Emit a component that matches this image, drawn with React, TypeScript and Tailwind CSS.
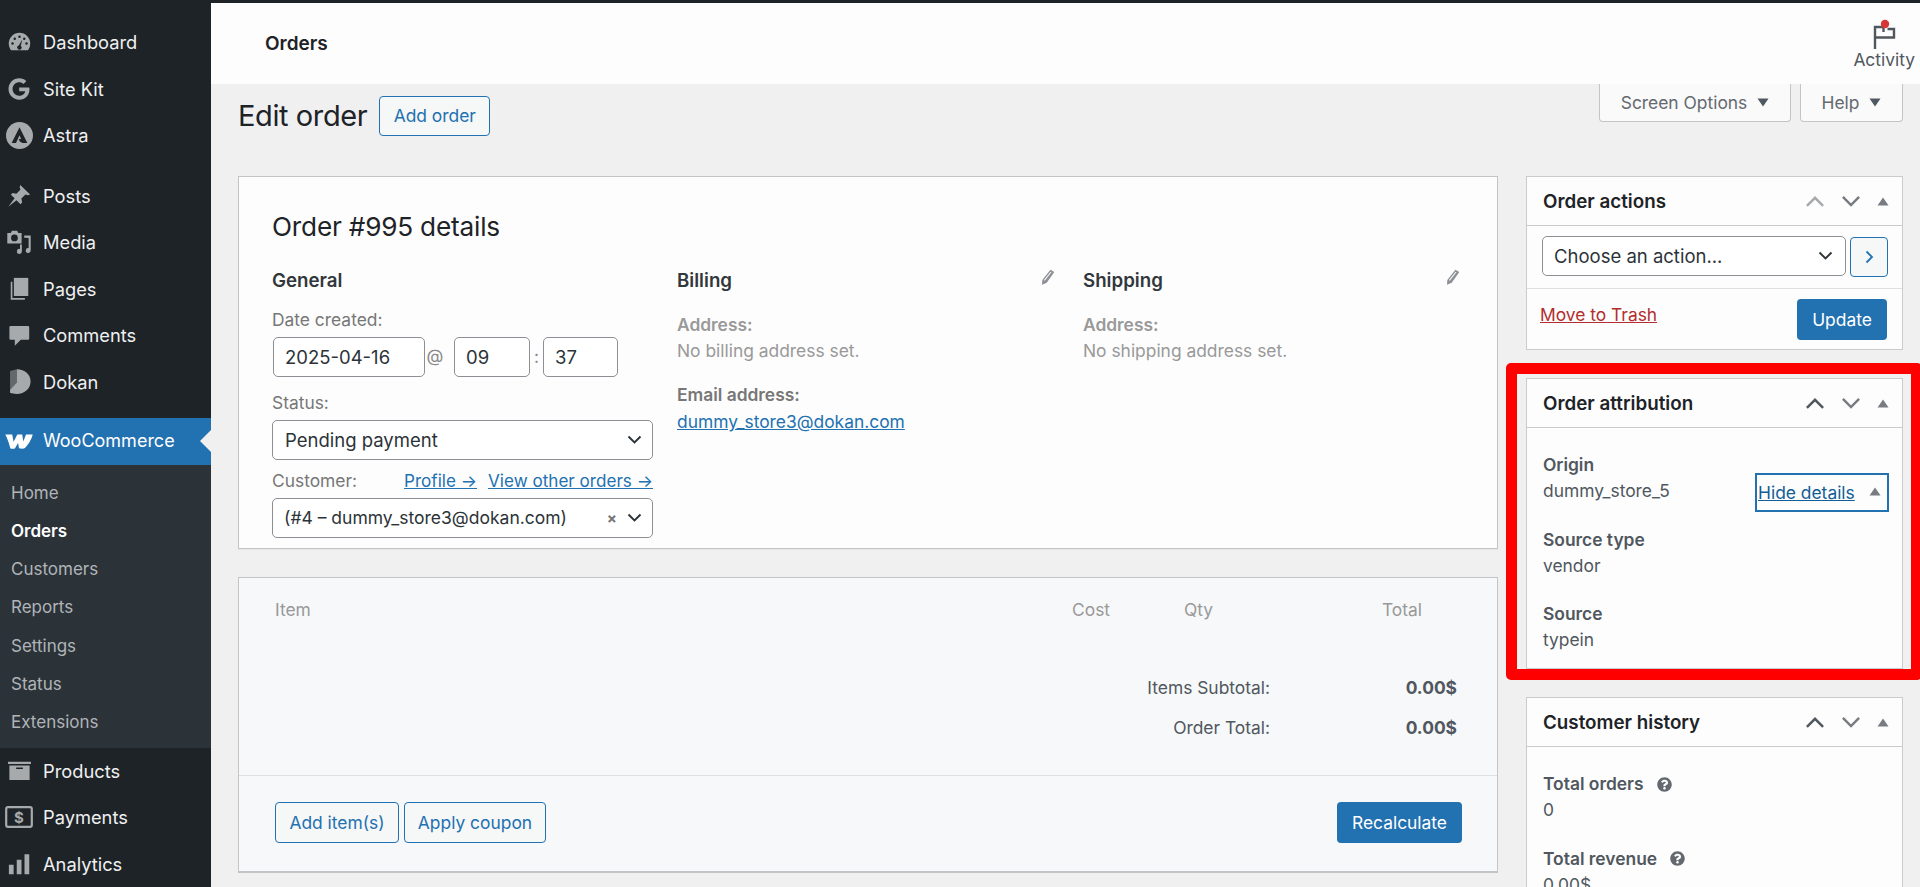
import React from "react";
import { FaGoogle, FaQuestionCircle } from "react-icons/fa";

const font = "[font-family:Inter,'Liberation_Sans',sans-serif]";

const Ic = ({ children, size = 24 }: { children: React.ReactNode; size?: number }) => (
  <svg width={size} height={size} viewBox="0 0 20 20" fill="#a7aaad">{children}</svg>
);

const icons: Record<string, React.ReactNode> = {
  dashboard: (
    <Ic size={25}>
      <path d="M3.2 16.200h13.600A8.600 8.600 0 0 0 18.600 10.800 8.600 8.600 0 0 0 1.400 10.800c0 2 .7 3.900 1.800 5.400z" />
      <circle cx="4.400" cy="10.800" r="1" fill="#1d2327" />
      <circle cx="6.200" cy="7" r="1" fill="#1d2327" />
      <circle cx="10" cy="5.300" r="1" fill="#1d2327" />
      <circle cx="13.800" cy="7" r="1" fill="#1d2327" />
      <circle cx="15.600" cy="10.800" r="1" fill="#1d2327" />
      <path d="M12.200 7.600l-1.200 5.100a1.700 1.700 0 1 1-1.600-.3z" fill="#1d2327" />
    </Ic>
  ),
  sitekit: <FaGoogle size={22} color="#a7aaad" />,
  astra: (
    <Ic size={27}>
      <circle cx="10" cy="10" r="10" />
      <path d="M10 3.800L4.200 15.600h3.200L10 9.800l1.200 2.700H9.400l1 2.200 1.900.9h3.500z" fill="#1d2327" />
    </Ic>
  ),
  posts: (
    <Ic size={25}>
      <path d="M10.600 1.500l7.900 7.600-1.800.7-1.900-.7-3.300 3.300.6 3.100-1.300 1.400-3.200-3.100-6.600 5.200 5.100-6.800-3-2.900 1.400-1.400 3 .6 3.300-3.400-.7-1.800z" />
    </Ic>
  ),
  media: (
    <Ic size={26}>
      <path fillRule="evenodd" d="M1 3h2.600L4.600 1.400h4L9.500 3H12v8.200H1zM6.500 4.300a2.600 2.600 0 1 0 0 5.200 2.600 2.600 0 0 0 0-5.200z" />
      <path d="M14 5h5v11.500a1.900 1.900 0 1 1-1.600-1.900V7h-1.600v-.2H14zM10.800 12h1.400v5.200a1.900 1.900 0 1 1-1.400-1.800z" />
    </Ic>
  ),
  pages: (
    <Ic size={25}>
      <path d="M5.500 1.500h11.500v14.500H5.500z" />
      <path d="M3 4.500h1.300v13h10V19H3z" />
    </Ic>
  ),
  comments: (
    <Ic size={24}>
      <path d="M3 2.500h14.500a1 1 0 0 1 1 1v9.500a1 1 0 0 1-1 1h-6l-5 5v-5H3a1 1 0 0 1-1-1V3.500a1 1 0 0 1 1-1z" />
    </Ic>
  ),
  dokan: (
    <Ic size={27}>
      <path d="M3 2.200l5-1.200v11L3 16z" fill="#62686c" />
      <path d="M8 1c6 0 10.200 3.800 10.200 9S14 19.200 8 19.200c-2 0-3.800-.3-5-.8v-2.200L8 11z" />
    </Ic>
  ),
  products: (
    <Ic size={27}>
      <path d="M1.500 3.500h17v1.600h-17zM2.500 6.300h15v10.700h-15z" />
      <rect x="7.500" y="7.800" width="5" height="1.100" fill="#1d2327" />
    </Ic>
  ),
  payments: (
    <svg width="28" height="22" viewBox="0 0 28 22">
      <rect x="1.200" y="1.200" width="25.600" height="19.600" rx="1.800" fill="none" stroke="#a7aaad" strokeWidth="2.200" />
      <text x="14" y="16.500" textAnchor="middle" fontSize="15" fontWeight="700" fill="#a7aaad" fontFamily="Inter, sans-serif">$</text>
    </svg>
  ),
  analytics: (
    <Ic size={25}>
      <path d="M1.500 11h3.800v7.500H1.500zM7.800 7h3.800v11.500H7.800zM14 2.500h3.800v16H14z" />
    </Ic>
  ),
};

const Woo = () => (
  <svg width="28" height="15" viewBox="0 0 28 15" fill="#fff">
    <path d="M.3.4h6.900l1.400 7.400L12.300.4h4.900l1.100 7.200L21 .4h6.700c-1 4.300-4.600 11.300-8.700 14.200-2 .2-3.600 0-5-.4l-.9-5.200-3.200 5.400c-1.700.3-3.200.3-4.500 0C4.200 10 2.500 4.200.3.4z" />
  </svg>
);

const MenuItem = ({ icon, label }: { icon: string; label: string }) => (
  <div className="h-[46.500px] flex items-center text-[#f0f0f1] text-[18.300px]">
    <span className="w-[43px] flex justify-center pr-[5px] shrink-0">{icons[icon]}</span>
    <span>{label}</span>
  </div>
);

const Sub = ({ label, active }: { label: string; active?: boolean }) => (
  <div className={`h-[38.200px] flex items-center pl-[11px] text-[17px] ${active ? "text-white font-semibold" : "text-[#b0b4b8]"}`}>{label}</div>
);

const Chev = ({ up, color, size = 21 }: { up?: boolean; color: string; size?: number }) => (
  <svg width={size} height={size * 0.62} viewBox="0 0 21 13" fill="none" stroke={color} strokeWidth="2.600">
    {up ? <path d="M2 11.500L10.500 3 19 11.500" /> : <path d="M2 2l8.500 8.500L19 2" />}
  </svg>
);

const Tri = ({ color = "#787c82", down }: { color?: string; down?: boolean }) => (
  <svg width="12" height="9" viewBox="0 0 12 9" fill={color}>
    {down ? <path d="M.5 .5h11L6 8.500z" /> : <path d="M.5 8.500h11L6 .5z" />}
  </svg>
);

const Pencil = () => (
  <svg width="14" height="16" viewBox="0 0 13 15" fill="#8c8f94">
    <path d="M8.800.6l3.600 2.300L5.300 13 .9 14.800l.3-4.600z" />
    <path d="M2.700 10.400l6.300-7.900.7.500-6.200 8z" fill="#fdfdfd" />
  </svg>
);

const SelectChev = () => (
  <svg width="15" height="10" viewBox="0 0 15 10" fill="none" stroke="#2c3338" strokeWidth="1.900">
    <path d="M1.500 1.500l6 6 6-6" />
  </svg>
);

const BoxHeader = ({ title, upColor = "#50575e" }: { title: string; upColor?: string }) => (
  <div className="h-[49px] border-b border-[#c9cbce] flex items-center pl-[16px] pr-[13px] pt-[1px] shrink-0">
    <span className="font-semibold text-[18.800px] text-[#1d2327] flex-1">{title}</span>
    <span className="mr-[16px] flex"><Chev up color={upColor} size={20} /></span>
    <span className="mr-[16px] flex"><Chev color="#787c82" size={20} /></span>
    <Tri />
  </div>
);

const OutlineBtn = ({ children, w }: { children: React.ReactNode; w: string }) => (
  <div className={`${w} h-[41px] rounded-[4px] border border-[#2271b1] bg-[#f6f7f7] text-[#2271b1] flex items-center justify-center`}>{children}</div>
);

const Field = ({ label, value, icon, mb = "mb-[22.500px]" }: { label: string; value: string; icon?: boolean; mb?: string }) => (
  <div className={mb}>
    <div className="h-[26px] leading-[26px] font-semibold text-[#50575e] flex items-center">
      {label}
      {icon && <span className="ml-[13px] flex"><FaQuestionCircle size={15} color="#646970" /></span>}
    </div>
    <div className="h-[26px] leading-[26px] text-[#50575e]">{value}</div>
  </div>
);

const inputCls = "h-[40px] rounded-[5px] border border-[#8c8f94] text-[#2c3338] flex items-center text-[18.500px] bg-white";
const h3Cls = "font-semibold text-[18.700px] leading-[24px] text-[#32373c]";

export default function App() {
  return (
    <div className={`${font} h-[887px] w-[1920px] overflow-hidden flex bg-[#f0f0f1] text-[17.400px] leading-[20px]`}>
      <aside className="w-[211px] shrink-0 bg-[#1d2327] pt-[19px] flex flex-col">
        <MenuItem icon="dashboard" label="Dashboard" />
        <MenuItem icon="sitekit" label="Site Kit" />
        <MenuItem icon="astra" label="Astra" />
        <div className="h-[14px]" />
        <MenuItem icon="posts" label="Posts" />
        <MenuItem icon="media" label="Media" />
        <MenuItem icon="pages" label="Pages" />
        <MenuItem icon="comments" label="Comments" />
        <MenuItem icon="dokan" label="Dokan" />
        <div className="mt-[13px] h-[47px] bg-[#2271b1] flex items-center text-white text-[18px] relative">
          <span className="w-[43px] flex justify-center pr-[5px] shrink-0"><Woo /></span>
          WooCommerce
          <span className="absolute right-0 top-1/2 -translate-y-1/2 w-0 h-0 border-y-[11px] border-y-transparent border-r-[11px] border-r-[#f0f0f1]" />
        </div>
        <div className="bg-[#2c3338] h-[283px] pt-[9px]">
          <Sub label="Home" />
          <Sub label="Orders" active />
          <Sub label="Customers" />
          <Sub label="Reports" />
          <Sub label="Settings" />
          <Sub label="Status" />
          <Sub label="Extensions" />
        </div>
        <MenuItem icon="products" label="Products" />
        <MenuItem icon="payments" label="Payments" />
        <MenuItem icon="analytics" label="Analytics" />
      </aside>

      <main className="flex-1 min-w-0 flex flex-col">
        <header className="h-[84px] shrink-0 border-t-[3px] border-[#1d2327] bg-[#fdfdfd] flex items-center pl-[54px] pr-[5px]">
          <span className="font-semibold text-[19px] text-[#1d2327] flex-1">Orders</span>
          <div className="flex flex-col items-center pt-[1px]">
            <svg width="26" height="30" viewBox="0 0 26 30" fill="none" stroke="#50575e" strokeWidth="2.400">
              <path d="M4 30V8h8.500v5" />
              <path d="M16.500 10H23v8.500H4" />
              <circle cx="14" cy="5" r="4.200" fill="#d63638" stroke="none" />
            </svg>
            <span className="text-[#50575e] mt-[1px]">Activity</span>
          </div>
        </header>

        <div className="flex pl-[27px]">
          <div className="w-[1260px] shrink-0 mr-[28px]">
            <div className="h-[92px] flex items-start pt-[12px]">
              <h1 className="text-[29px] leading-[40px] text-[#1d2327] tracking-[-0.4px] mr-[12px]">Edit order</h1>
              <div className="h-[40px] w-[111px] rounded-[4px] border border-[#2271b1] bg-[#f6f7f7] text-[#2271b1] flex items-center justify-center">Add order</div>
            </div>

            <section className="h-[373px] border border-[#c3c4c7] bg-[#fdfdfd] pl-[33px] pt-[31px] shadow-[0_1px_1px_rgba(0,0,0,0.04)]">
              <h2 className="text-[26.200px] leading-[38px] text-[#1d2327] font-normal tracking-[-0.2px]">Order #995 details</h2>
              <div className="flex mt-[23px]">
                <div className="w-[381px] mr-[24px] shrink-0">
                  <h3 className={h3Cls}>General</h3>
                  <div className="mt-[15px] leading-[24px] text-[#777]">Date created:</div>
                  <div className="flex items-center mt-[5px] text-[#888]">
                    <div className={`${inputCls} w-[152px] ml-px pl-[11px]`}>2025-04-16</div>
                    <span className="w-[29px] text-center pr-[9px] -mt-[2px]">@</span>
                    <div className={`${inputCls} w-[76px] pl-[11px]`}>09</div>
                    <span className="w-[13px] text-center">:</span>
                    <div className={`${inputCls} w-[75px] pl-[11px]`}>37</div>
                  </div>
                  <div className="mt-[14px] leading-[24px] text-[#777]">Status:</div>
                  <div className={`${inputCls} w-[381px] mt-[5px] pl-[12px] pr-[10px] justify-between`}>
                    <span>Pending payment</span><SelectChev />
                  </div>
                  <div className="mt-[9px] h-[24px] flex items-center justify-between text-[#777]">
                    <span>Customer:</span>
                    <span className="text-[#2271b1] underline text-[17.100px] flex gap-[11px]"><span>Profile →</span><span>View other orders →</span></span>
                  </div>
                  <div className={`${inputCls} w-[381px] mt-[5px] pl-[11px] pr-[10px] justify-between`}>
                    <span className="text-[17.500px]">(#4 – dummy_store3@dokan.com)</span>
                    <span className="flex items-center gap-[10px]"><span className="text-[#777] font-bold text-[15px] leading-none">×</span><SelectChev /></span>
                  </div>
                </div>
                <div className="w-[406px] shrink-0 pr-[28px]">
                  <div className="flex justify-between items-start"><h3 className={h3Cls}>Billing</h3><span><Pencil /></span></div>
                  <div className="mt-[19px] leading-[26px] font-semibold text-[#999]">Address:</div>
                  <div className="leading-[26px] text-[#999]">No billing address set.</div>
                  <div className="mt-[18px] leading-[26px] font-semibold text-[#777]">Email address:</div>
                  <div className="leading-[28px] text-[#2271b1] underline">dummy_store3@dokan.com</div>
                </div>
                <div className="w-[378px] shrink-0 pr-[1px]">
                  <div className="flex justify-between items-start"><h3 className={h3Cls}>Shipping</h3><span><Pencil /></span></div>
                  <div className="mt-[19px] leading-[26px] font-semibold text-[#999]">Address:</div>
                  <div className="leading-[26px] text-[#999]">No shipping address set.</div>
                </div>
              </div>
            </section>

            <section className="mt-[28px] h-[296px] border border-[#c3c4c7] border-b-2 bg-[#f7f8fa] flex flex-col">
              <div className="h-[198px] px-[36px] pt-[20px] shrink-0 border-b border-[#dfe0e2]">
                <div className="flex text-[#999] leading-[24px]">
                  <span className="flex-1">Item</span>
                  <span className="w-[112px]">Cost</span>
                  <span className="w-[198px]">Qty</span>
                  <span className="w-[40px] mr-[39px]">Total</span>
                </div>
                <div className="mt-[54px] mr-[4px] flex justify-end text-[#50575e] leading-[24px]">
                  <span>Items Subtotal:</span><span className="w-[187px] text-right font-bold text-[#50575e]">0.00$</span>
                </div>
                <div className="mt-[16px] mr-[4px] flex justify-end text-[#50575e] leading-[24px]">
                  <span>Order Total:</span><span className="w-[187px] text-right font-bold text-[#50575e]">0.00$</span>
                </div>
              </div>
              <div className="flex items-start pt-[26px] pl-[36px] pr-[35px]">
                <OutlineBtn w="w-[124px] mr-[5px]">Add item(s)</OutlineBtn>
                <OutlineBtn w="w-[142px]">Apply coupon</OutlineBtn>
                <div className="ml-auto w-[125px] h-[41px] rounded-[4px] bg-[#2271b1] text-white flex items-center justify-center">Recalculate</div>
              </div>
            </section>
          </div>

          <div className="w-[377px] shrink-0">
            <div className="h-[92px] flex items-start justify-end gap-[9px]">
              <div className="w-[192px] h-[38px] border border-t-0 border-[#c3c4c7] rounded-b-[4px] bg-[#fafafa] text-[#646970] flex items-center justify-center gap-[10px] -ml-[100px]">Screen Options <Tri color="#50575e" down /></div>
              <div className="w-[103px] h-[38px] border border-t-0 border-[#c3c4c7] rounded-b-[4px] bg-[#fafafa] text-[#646970] flex items-center justify-center gap-[10px]">Help <Tri color="#50575e" down /></div>
            </div>

            <section className="h-[174px] border border-[#c9cbce] bg-[#fdfdfd]">
              <BoxHeader title="Order actions" upColor="#a7aaad" />
              <div className="h-[63px] border-b border-[#dfe0e2] pl-[15px] pt-[10px] flex items-start">
                <div className={`${inputCls} w-[304px] pl-[11px] pr-[12px] justify-between`}><span>Choose an action...</span><SelectChev /></div>
                <div className="ml-[4px] mt-[1px] w-[38px] h-[40px] border border-[#2271b1] rounded-[4px] bg-[#f6f7f7] flex items-center justify-center">
                  <svg width="9" height="14" viewBox="0 0 9 14" fill="none" stroke="#2271b1" strokeWidth="1.800"><path d="M1.500 1.500l5.500 5.500-5.500 5.500" /></svg>
                </div>
              </div>
              <div className="flex justify-between items-start pl-[13px] pr-[15px] pt-[10px]">
                <span className="text-[#b32d2e] underline mt-[6px]">Move to Trash</span>
                <div className="w-[90px] h-[41px] bg-[#2271b1] text-white rounded-[4px] flex items-center justify-center">Update</div>
              </div>
            </section>

            <div className="relative mt-[28px]">
              <section className="h-[291px] border border-[#c9cbce] bg-[#fdfdfd]">
                <BoxHeader title="Order attribution" />
                <div className="pl-[16px] pt-[24px] relative">
                  <Field label="Origin" value="dummy_store_5" />
                  <Field label="Source type" value="vendor" />
                  <Field label="Source" value="typein" mb="mb-0" />
                  <div className="absolute left-[228px] top-[45px] w-[134px] h-[39px] border-2 border-[#2271b1] flex items-center pl-[1px] text-[#135e96]">
                    <span className="underline">Hide details</span>
                    <span className="ml-[14px] flex -mt-[2px]"><Tri /></span>
                  </div>
                </div>
              </section>
              <div className="absolute -left-[20px] -top-[15px] -right-[19px] -bottom-[11px] border-[11px] border-[#ff0000] rounded-[5px] pointer-events-none" />
            </div>

            <section className="mt-[28px] border border-[#c9cbce] bg-[#fdfdfd] h-[300px]">
              <BoxHeader title="Customer history" />
              <div className="pl-[16px] pt-[24px]">
                <Field label="Total orders" value="0" icon />
                <Field label="Total revenue" value="0.00$" icon />
              </div>
            </section>
          </div>
        </div>
      </main>
    </div>
  );
}
